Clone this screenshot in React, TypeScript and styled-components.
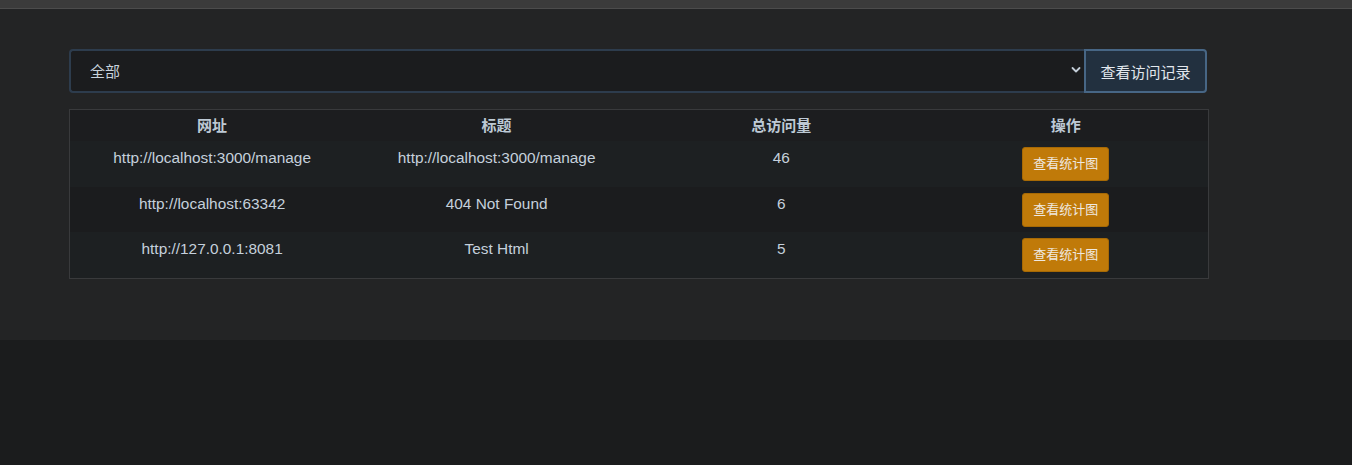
import React from "react";
import styled, { createGlobalStyle } from "styled-components";

const Global = createGlobalStyle`
  html, body { margin: 0; padding: 0; background: #1b1c1d; }
  body { font-family: "Liberation Sans", "Noto Sans CJK SC", sans-serif; font-size: 15px; color: #c5d0dc; }
`;

const TopBar = styled.div`
  height: 8px;
  background: #3b3b3b;
  border-bottom: 1px solid #4c4c4c;
`;

const Panel = styled.main`
  background: #232425;
  padding: 40px 145px 61px 69px;
  display: flex;
  flex-direction: column;
  gap: 16px;
`;

const FilterBar = styled.form`
  display: flex;
  height: 44px;
`;

const SelectWrap = styled.div`
  position: relative;
  flex: 1;
  display: flex;
`;

const Select = styled.select`
  appearance: none;
  flex: 1;
  height: 44px;
  margin: 0;
  padding: 0 30px 0 19px;
  background: #1b1c1e;
  color: #c8d2dc;
  border: 2px solid #2d3c4d;
  border-right: none;
  border-radius: 4px 0 0 4px;
  font-family: "Liberation Sans", "Noto Sans CJK SC", sans-serif;
  font-size: 15px;
  outline: none;
`;

const Chevron = styled.svg`
  position: absolute;
  right: 3px;
  top: 17px;
  pointer-events: none;
`;

const SubmitButton = styled.button`
  width: 123px;
  height: 44px;
  margin: 0;
  background: #22303f;
  border: 2px solid #476685;
  border-radius: 0 4px 4px 0;
  color: #e3e8ee;
  font-family: "Liberation Sans", "Noto Sans CJK SC", sans-serif;
  font-size: 15px;
  padding: 0;
`;

const Table = styled.table`
  width: 1140px;
  border-collapse: collapse;
  border: 1px solid #393a3c;
  table-layout: fixed;
`;

const HeadCell = styled.th`
  background: #1c1d1f;
  font-weight: bold;
  color: #bdc9d5;
  line-height: 20px;
  height: 20px;
  padding: 6px 6px 5px;
  text-align: center;
`;

const Row = styled.tr<{ $odd: boolean }>`
  background: ${(p) => (p.$odd ? "#1d2022" : "#1b1c1e")};
`;

const Cell = styled.td`
  text-align: center;
  vertical-align: top;
  line-height: 22px;
  padding: 6px 6px 5.5px;
  height: 34px;
  color: #c5d0dc;
  font-size: 15.4px;
`;

const ChartButton = styled.button`
  display: block;
  margin: 0 auto;
  width: 87px;
  height: 34px;
  padding: 0;
  background: #c07a09;
  border: 1px solid #a66905;
  border-radius: 3px;
  color: #efe9e0;
  font-family: "Liberation Sans", "Noto Sans CJK SC", sans-serif;
  font-size: 13px;
  line-height: 20px;
`;

const rows = [
  { url: "http://localhost:3000/manage", title: "http://localhost:3000/manage", total: 46 },
  { url: "http://localhost:63342", title: "404 Not Found", total: 6 },
  { url: "http://127.0.0.1:8081", title: "Test Html", total: 5 },
];

export default function App() {
  return (
    <>
      <Global />
      <TopBar />
      <Panel>
        <FilterBar onSubmit={(e) => e.preventDefault()}>
          <SelectWrap>
            <Select defaultValue="all">
              <option value="all">全部</option>
            </Select>
            <Chevron width="10" height="8" viewBox="0 0 10 8">
              <path d="M1.5 2 L5 5.5 L8.5 2" fill="none" stroke="#c3cdd8" strokeWidth="1.8" strokeLinecap="round" strokeLinejoin="round" />
            </Chevron>
          </SelectWrap>
          <SubmitButton type="submit">查看访问记录</SubmitButton>
        </FilterBar>
        <Table>
          <thead>
            <tr>
              <HeadCell>网址</HeadCell>
              <HeadCell>标题</HeadCell>
              <HeadCell>总访问量</HeadCell>
              <HeadCell>操作</HeadCell>
            </tr>
          </thead>
          <tbody>
            {rows.map((r, i) => (
              <Row key={r.url} $odd={i % 2 === 0}>
                <Cell>{r.url}</Cell>
                <Cell>{r.title}</Cell>
                <Cell>{r.total}</Cell>
                <Cell>
                  <ChartButton type="button">查看统计图</ChartButton>
                </Cell>
              </Row>
            ))}
          </tbody>
        </Table>
      </Panel>
    </>
  );
}
